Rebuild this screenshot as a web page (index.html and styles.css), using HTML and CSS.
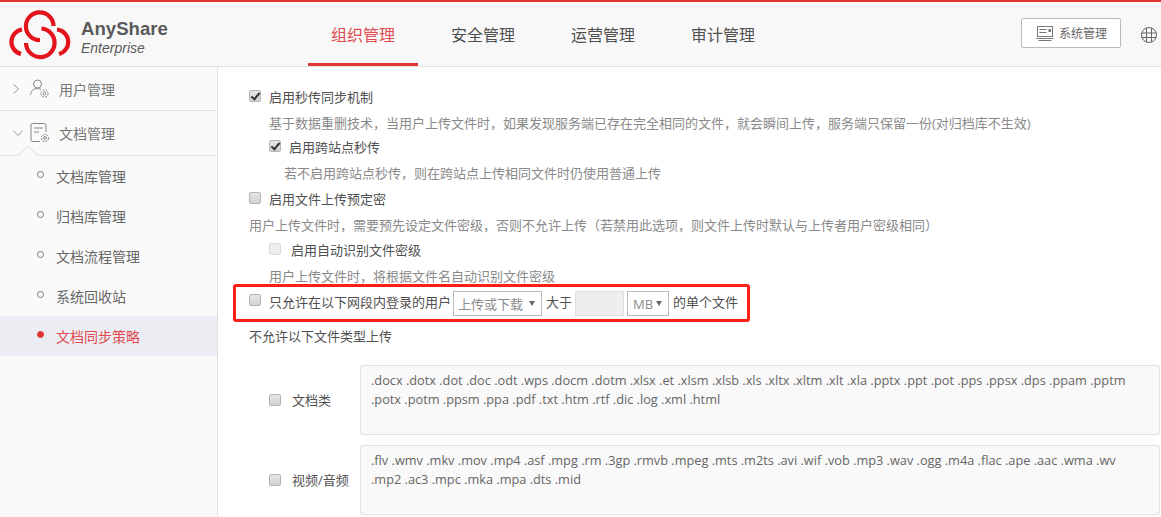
FILE: index.html
```html
<!DOCTYPE html>
<html lang="en">
<head>
    <meta charset="UTF-8">
    <meta name="viewport" content="width=device-width, initial-scale=1.0">
    <title>AnyShare</title>
    <link rel="stylesheet" href="styles.css">
</head>
<body>
    <header class="header">
        <div class="logo">
            <svg class="logo-mark" width="72" height="56" viewBox="0 0 72 56" fill="none" stroke="#e3141c" stroke-width="4.200">
                <path d="M18 23.500 A 12.500 12.500 0 0 0 17 48"/>
                <path d="M53 23.500 A 12.500 12.500 0 0 1 55 48"/>
                <path d="M49.500 20 A 13.800 13.800 0 1 0 36 34"/>
                <path d="M37.500 22.500 A 14.300 14.300 0 1 1 22 37"/>
            </svg>
            <div class="logo-text">
                <div class="logo-name">AnyShare</div>
                <div class="logo-sub">Enterprise</div>
            </div>
        </div>
        <nav class="nav">
            <a class="nav-item active">组织管理</a>
            <a class="nav-item">安全管理</a>
            <a class="nav-item">运营管理</a>
            <a class="nav-item">审计管理</a>
        </nav>
        <button class="sys-btn">
            <svg width="18" height="15" viewBox="0 0 18 15" fill="none" stroke="#777">
                <rect x="1.500" y="0.500" width="15" height="10"/>
                <path d="M3.500 3.500h7M3.500 6.500h7M0.500 12.500h17M2.500 14.500h13"/>
                <rect x="12.500" y="3" width="2.500" height="3" fill="#777" stroke="none"/>
            </svg>
            系统管理
        </button>
        <svg class="globe" width="16" height="16" viewBox="0 0 16 16" fill="none" stroke="#666">
            <circle cx="8" cy="8" r="7.500"/>
            <path d="M0.500 6h15M0.500 10.500h15M5.500 1v14M10.500 1v14"/>
        </svg>
    </header>

    <div class="main">
        <aside class="side">
            <div class="side-group">
                <svg class="chev" width="12" height="12" viewBox="0 0 12 12" fill="none" stroke="#999"><path d="M1.500 1.500l5 4.500-5 4.500"/></svg>
                <svg class="side-icon" width="20" height="20" viewBox="0 0 20 20" fill="none" stroke="#888">
                    <circle cx="7.500" cy="5" r="4"/>
                    <path d="M0.500 16 C1 11 4 9.500 7.500 9.500 C9 9.500 10 10 11 10.500"/>
                    <circle cx="14.500" cy="14.500" r="3.600" stroke-dasharray="2 1"/>
                    <circle cx="14.500" cy="14.500" r="1.400"/>
                </svg>
                用户管理
            </div>
            <div class="side-group open">
                <svg class="chev" width="12" height="8" viewBox="0 0 12 8" fill="none" stroke="#999"><path d="M1.500 1.500l4.500 5 4.500-5"/></svg>
                <svg class="side-icon" width="20" height="20" viewBox="0 0 20 20" fill="none" stroke="#888">
                    <path d="M10 18.500H2.500a1.500 1.500 0 0 1-1.500-1.500V2a1.500 1.500 0 0 1 1.500-1.500h12a1.500 1.500 0 0 1 1.500 1.500v7"/>
                    <path d="M4 5h9M4 9h5"/>
                    <circle cx="15" cy="15" r="3.600" stroke-dasharray="2 1"/>
                    <circle cx="15" cy="15" r="1.400"/>
                </svg>
                文档管理
            </div>
            <ul class="side-list">
                <li>文档库管理</li>
                <li>归档库管理</li>
                <li>文档流程管理</li>
                <li>系统回收站</li>
                <li class="current">文档同步策略</li>
            </ul>
        </aside>

        <section class="content">
            <label class="row check-row"><input type="checkbox" checked>启用秒传同步机制</label>
            <p class="row note indent">基于数据重删技术，当用户上传文件时，如果发现服务端已存在完全相同的文件，就会瞬间上传，服务端只保留一份(对归档库不生效)</p>
            <label class="row check-row indent pull-2"><input type="checkbox" checked>启用跨站点秒传</label>
            <p class="row note indent-more">若不启用跨站点秒传，则在跨站点上传相同文件时仍使用普通上传</p>
            <label class="row check-row"><input type="checkbox">启用文件上传预定密</label>
            <p class="row note">用户上传文件时，需要预先设定文件密级，否则不允许上传（若禁用此选项，则文件上传时默认与上传者用户密级相同）</p>
            <label class="row check-row indent disabled pull-1"><input type="checkbox" disabled>启用自动识别文件密级</label>
            <p class="row note indent">用户上传文件时，将根据文件名自动识别文件密级</p>

            <div class="limit-row">
                <input type="checkbox">
                <span class="limit-text">只允许在以下网段内登录的用户</span>
                <span class="fake-select wide">上传或下载<i></i></span>
                <span class="limit-text gt">大于</span>
                <span class="fake-input"></span>
                <span class="fake-select narrow">MB<i></i></span>
                <span class="limit-text tail">的单个文件</span>
            </div>

            <p class="row types-title">不允许以下文件类型上传</p>

            <div class="type-row">
                <label class="type-label"><input type="checkbox">文档类</label>
                <div class="type-box">.docx .dotx .dot .doc .odt .wps .docm .dotm .xlsx .et .xlsm .xlsb .xls .xltx .xltm .xlt .xla .pptx .ppt .pot .pps .ppsx .dps .ppam .pptm .potx .potm .ppsm .ppa .pdf .txt .htm .rtf .dic .log .xml .html</div>
            </div>
            <div class="type-row">
                <label class="type-label"><input type="checkbox">视频/音频</label>
                <div class="type-box">.flv .wmv .mkv .mov .mp4 .asf .mpg .rm .3gp .rmvb .mpeg .mts .m2ts .avi .wif .vob .mp3 .wav .ogg .m4a .flac .ape .aac .wma .wv .mp2 .ac3 .mpc .mka .mpa .dts .mid</div>
            </div>
        </section>
    </div>
</body>
</html>
```

FILE: styles.css
```css
html,body{
    height: 100%;
}
body{
    margin: 0;
    height: 517px;
    overflow: hidden;
    background: #fff;
    color: #505050;
    font-family: "Open Sans", "Noto Sans CJK SC", sans-serif;
    font-size: 13px;
}
p{
    margin: 0;
}

/* 顶部 */
.header{
    display: flex;
    align-items: flex-start;
    height: 64px;
    background: #f8f8f8;
    border-top: 2px solid #e03535;
    border-bottom: 1px solid #e2e2e2;
}
.logo{
    display: flex;
    flex: none;
    width: 308px;
    padding: 4px 0 0 4px;
    box-sizing: border-box;
}
.logo-text{
    margin-left: 5px;
    padding-top: 11px;
    color: #5a5a5a;
}
.logo-name{
    font-family: "Liberation Sans", sans-serif;
    font-size: 18.600px;
    font-weight: bold;
    line-height: 23px;
}
.logo-sub{
    font-family: "Liberation Sans", sans-serif;
    font-size: 14px;
    font-style: italic;
    line-height: 16px;
}
.nav{
    display: flex;
    flex: none;
}
.nav-item{
    width: 120px;
    height: 64px;
    line-height: 66px;
    text-align: center;
    font-size: 16px;
    color: #505050;
}
.nav-item.active{
    width: 110px;
    height: 61px;
    margin-right: 5px;
    color: #e04a50;
    border-bottom: 3px solid #e03535;
}
.sys-btn{
    display: flex;
    align-items: center;
    flex: none;
    gap: 5px;
    width: 100px;
    height: 30px;
    margin: 16px 0 0 238px;
    padding: 0 0 0 14px;
    background: #fff;
    border: 1px solid #bbb;
    border-radius: 2px;
    color: #666;
    font-family: inherit;
    font-size: 12px;
}
.globe{
    margin: 25px 0 0 20px;
    flex: none;
}

.main{
    display: flex;
    height: 450px;
}

/* 左侧菜单 */
.side{
    width: 217px;
    flex: none;
    background: #fafafa;
    border-right: 1px solid #e2e2e2;
    font-size: 14px;
}
.side-group{
    position: relative;
    display: flex;
    align-items: center;
    height: 43px;
    padding-left: 12px;
    border-bottom: 1px solid #e2e2e2;
    color: #777;
}
.side-group.open{
    height: 44px;
}
/* 展开时的小三角 */
.side-group.open::after{
    content: "";
    position: absolute;
    left: 21px;
    bottom: -7px;
    width: 14px;
    height: 14px;
    box-sizing: border-box;
    background: #fafafa;
    border-left: 1px solid #e2e2e2;
    border-top: 1px solid #e2e2e2;
    transform: rotate(45deg);
}
.chev{
    margin-right: 6px;
}
.side-icon{
    margin-right: 9px;
}
.side-list{
    list-style: none;
    margin: 0;
    padding: 0;
}
.side-list li{
    display: flex;
    align-items: center;
    height: 40px;
    padding-left: 37px;
    color: #666;
}
.side-list li::before{
    content: "";
    width: 5px;
    height: 5px;
    margin: 0 12px 3px 0;
    border: 1px solid #777;
    border-radius: 50%;
}
.side-list li.current{
    background: #ecedf2;
    color: #e04a50;
}
.side-list li.current::before{
    background: #e03535;
    border-color: #e03535;
}

/* 右侧内容 */
.content{
    flex: 1;
    padding: 17px 0 0 31px;
    min-width: 0;
    line-height: 26px;
}
.row{
    display: block;
    height: 26px;
    white-space: nowrap;
}
.check-row{
    display: flex;
    align-items: center;
}
input[type="checkbox"]{
    appearance: none;
    -webkit-appearance: none;
    position: relative;
    flex: none;
    width: 12px;
    height: 12px;
    margin: 0 8px 2px 0;
    background: linear-gradient(#e6e6e6, #d2d2d2);
    border: 1px solid #b4b4b4;
    border-radius: 2px;
}
input[type="checkbox"]:checked::after{
    content: "";
    position: absolute;
    left: 3px;
    top: 0;
    width: 3px;
    height: 7px;
    border: solid #333;
    border-width: 0 2px 2px 0;
    transform: rotate(40deg);
}
input[type="checkbox"]:disabled{
    background: #eee;
    border-color: #ddd;
}
.note{
    color: #8a8a8a;
}
.indent{
    margin-left: 20px;
}
.indent-more{
    margin-left: 35px;
}
.pull-2{
    margin-top: -2px;
}
.pull-1{
    margin-top: -1px;
}
.disabled input[type="checkbox"]{
    margin-right: 10px;
}

/* 红框一行 */
.limit-row{
    display: flex;
    align-items: center;
    width: 517px;
    height: 38px;
    margin: -5px 0 0 -16px;
    padding-left: 13px;
    box-sizing: border-box;
    border: 3px solid #ff2015;
    border-radius: 3px;
    white-space: nowrap;
}
.limit-row input[type="checkbox"]{
    margin: 0 8px 6px 0;
}
.limit-text{
    margin-bottom: 3px;
}
.limit-text.gt{
    margin-left: 4px;
}
.limit-text.tail{
    margin-left: 4px;
}
.fake-select{
    position: relative;
    display: block;
    height: 25px;
    line-height: 25px;
    padding-left: 4px;
    box-sizing: border-box;
    background: #fff;
    border: 1px solid #bbb;
    color: #8c8c8c;
}
.fake-select.wide{
    width: 89px;
    margin-left: 2px;
}
.fake-select.narrow{
    width: 42px;
    margin-left: 3px;
    padding-left: 5px;
}
.fake-select i{
    position: absolute;
    right: 6px;
    top: 9px;
    border: 3px solid transparent;
    border-top: 5px solid #666;
    border-bottom: 0;
}
.fake-input{
    width: 49px;
    height: 25px;
    margin-left: 3px;
    box-sizing: border-box;
    background: #eee;
    border: 1px solid #e0e0e0;
}
.types-title{
    margin-top: 1px;
}
.type-row{
    display: flex;
    align-items: center;
    height: 70px;
    margin-bottom: 10px;
}
.types-title + .type-row{
    margin-top: 16px;
}
.type-label{
    display: flex;
    align-items: center;
    width: 111px;
    padding-left: 20px;
    box-sizing: border-box;
}
.type-label input[type="checkbox"]{
    margin: 0 11px 0 0;
}
.type-box{
    width: 800px;
    height: 70px;
    padding: 5px 10px;
    box-sizing: border-box;
    background: #f9f9f9;
    border: 1px solid #e2e2e2;
    border-radius: 2px;
    line-height: 19px;
    color: #666;
    font-size: 12.750px;
}
```
